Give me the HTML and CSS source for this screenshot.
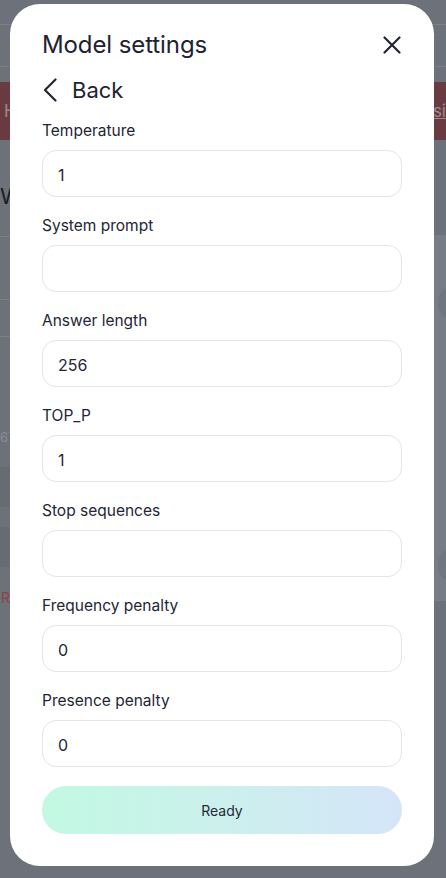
FILE: index.html
```html
<!DOCTYPE html>
<html lang="en">
<head>
<meta charset="utf-8">
<title>Model settings</title>
<link rel="stylesheet" href="styles.css">
</head>
<body>
<div class="page">
  <div class="bg-row bg-top"></div>
  <div class="bg-row bg-top2"></div>
  <div class="bg-alert"><span class="bg-alert-l">H</span><span class="bg-alert-r">ssi</span></div>
  <div class="bg-title">W</div>
  <div class="bg-body">
    <div class="bg-left">
      <div class="bg-line l1"></div>
      <div class="bg-line l2"></div>
      <div class="bg-line l3"></div>
      <div class="bg-num">67</div>
      <div class="bg-block"></div>
      <div class="bg-block"></div>
      <div class="bg-r">R</div>
    </div>
    <div class="bg-right">
      <div class="bg-panel"><span class="bg-dot d1"></span><span class="bg-dot d2"></span></div>
    </div>
  </div>
</div>

<div class="modal">
  <div class="modal-head">
    <h1 class="modal-title">Model settings</h1>
    <svg class="close" width="18" height="18" viewBox="0 0 18 18"><path d="M1.5 1.5 L16.5 16.5 M16.5 1.5 L1.5 16.5" stroke="#222634" stroke-width="2.2" stroke-linecap="round" fill="none"/></svg>
  </div>
  <div class="back">
    <svg class="chev" width="14" height="24" viewBox="0 0 14 24"><path d="M12.5 1.5 L2 12 L12.5 22.5" stroke="#222634" stroke-width="2.2" stroke-linecap="round" stroke-linejoin="round" fill="none"/></svg>
    <span>Back</span>
  </div>
  <div class="fields">
    <div class="field"><div class="label">Temperature</div><div class="input">1</div></div>
    <div class="field"><div class="label">System prompt</div><div class="input"></div></div>
    <div class="field"><div class="label">Answer length</div><div class="input">256</div></div>
    <div class="field"><div class="label">TOP_P</div><div class="input">1</div></div>
    <div class="field"><div class="label">Stop sequences</div><div class="input"></div></div>
    <div class="field"><div class="label">Frequency penalty</div><div class="input">0</div></div>
    <div class="field"><div class="label">Presence penalty</div><div class="input">0</div></div>
  </div>
  <button class="ready">Ready</button>
</div>
</body>
</html>
```
FILE: styles.css
```css
* { box-sizing: border-box; }
html, body { margin: 0; padding: 0; }
body {
  width: 446px;
  height: 878px;
  overflow: hidden;
  background: #6d7179;
  font-family: Inter, "Noto Sans", sans-serif;
  position: relative;
}
.page { width: 446px; height: 878px; display: flex; flex-direction: column; }
.bg-row { height: 25px; border-bottom: 1px solid #7b7f86; }
.bg-top2 { height: 42px; }
.bg-alert {
  margin-top: 15px;
  height: 58px;
  background: #6a3a41;
  display: flex;
  justify-content: space-between;
  align-items: center;
  color: #9a8a90;
  font-size: 17px;
}
.bg-alert-l { padding-left: 4px; }
.bg-alert-r { text-decoration: underline; }
.bg-title { margin-top: 42px; font-size: 22px; color: #1b1d24; line-height: 28px; padding-left: 0; }
.bg-body { display: flex; justify-content: space-between; flex: 1; }
.bg-left { width: 10px; display: flex; flex-direction: column; }
.bg-line { height: 1px; background: #7b7f86; }
.l1 { margin-top: 26px; }
.l2 { margin-top: 62px; }
.l3 { margin-top: 36px; }
.bg-num { margin-top: 92px; font-size: 13px; color: #8a8d94; }
.bg-block { height: 40px; background: #666b74; margin-top: 22px; }
.bg-block + .bg-block { margin-top: 20px; }
.bg-r { margin-top: 22px; color: #8a4448; font-size: 14px; margin-left: 1px; }
.bg-right { width: 12px; display: flex; flex-direction: column; }
.bg-panel { margin-top: 25px; height: 366px; background: #787c84; position: relative; }
.bg-dot { position: absolute; left: 4px; width: 24px; height: 32px; border-radius: 50%; background: #71757d; }
.d1 { top: 52px; }
.d2 { top: 314px; }

.modal {
  position: absolute;
  left: 10px;
  top: 4px;
  width: 424px;
  height: 862px;
  background: #fff;
  border-radius: 30px;
  padding: 27px 32px 0 32px;
  color: #1e2231;
}
.modal-head { display: flex; justify-content: space-between; align-items: center; height: 28px; }
.modal-title { margin: 0; font-size: 24px; font-weight: 400; line-height: 28px; letter-spacing: -0.1px; }
.close { margin-right: 1px; margin-top: -1px; }
.back { display: flex; align-items: center; gap: 15px; margin-top: 17px; height: 28px; font-size: 22px; }
.chev { margin-left: 1px; }
.fields { margin-top: 16px; display: flex; flex-direction: column; gap: 18px; }
.field { display: flex; flex-direction: column; gap: 8px; }
.label { font-size: 15.5px; line-height: 22px; color: #232634; }
.input {
  height: 47px;
  border: 1px solid #e4e4ee;
  border-radius: 14px;
  padding: 2px 0 0 15px;
  display: flex;
  align-items: center;
  font-size: 16px;
  color: #232836;
}
.ready {
  display: block;
  margin-top: 19px;
  width: 360px;
  height: 48px;
  border: none;
  border-radius: 24px;
  background: linear-gradient(90deg, #c2f8e2 0%, #c9f2ea 40%, #d5e5f9 100%);
  font-family: Inter, "Noto Sans", sans-serif;
  font-size: 14px;
  color: #262a36;
  padding: 0;
}
```
